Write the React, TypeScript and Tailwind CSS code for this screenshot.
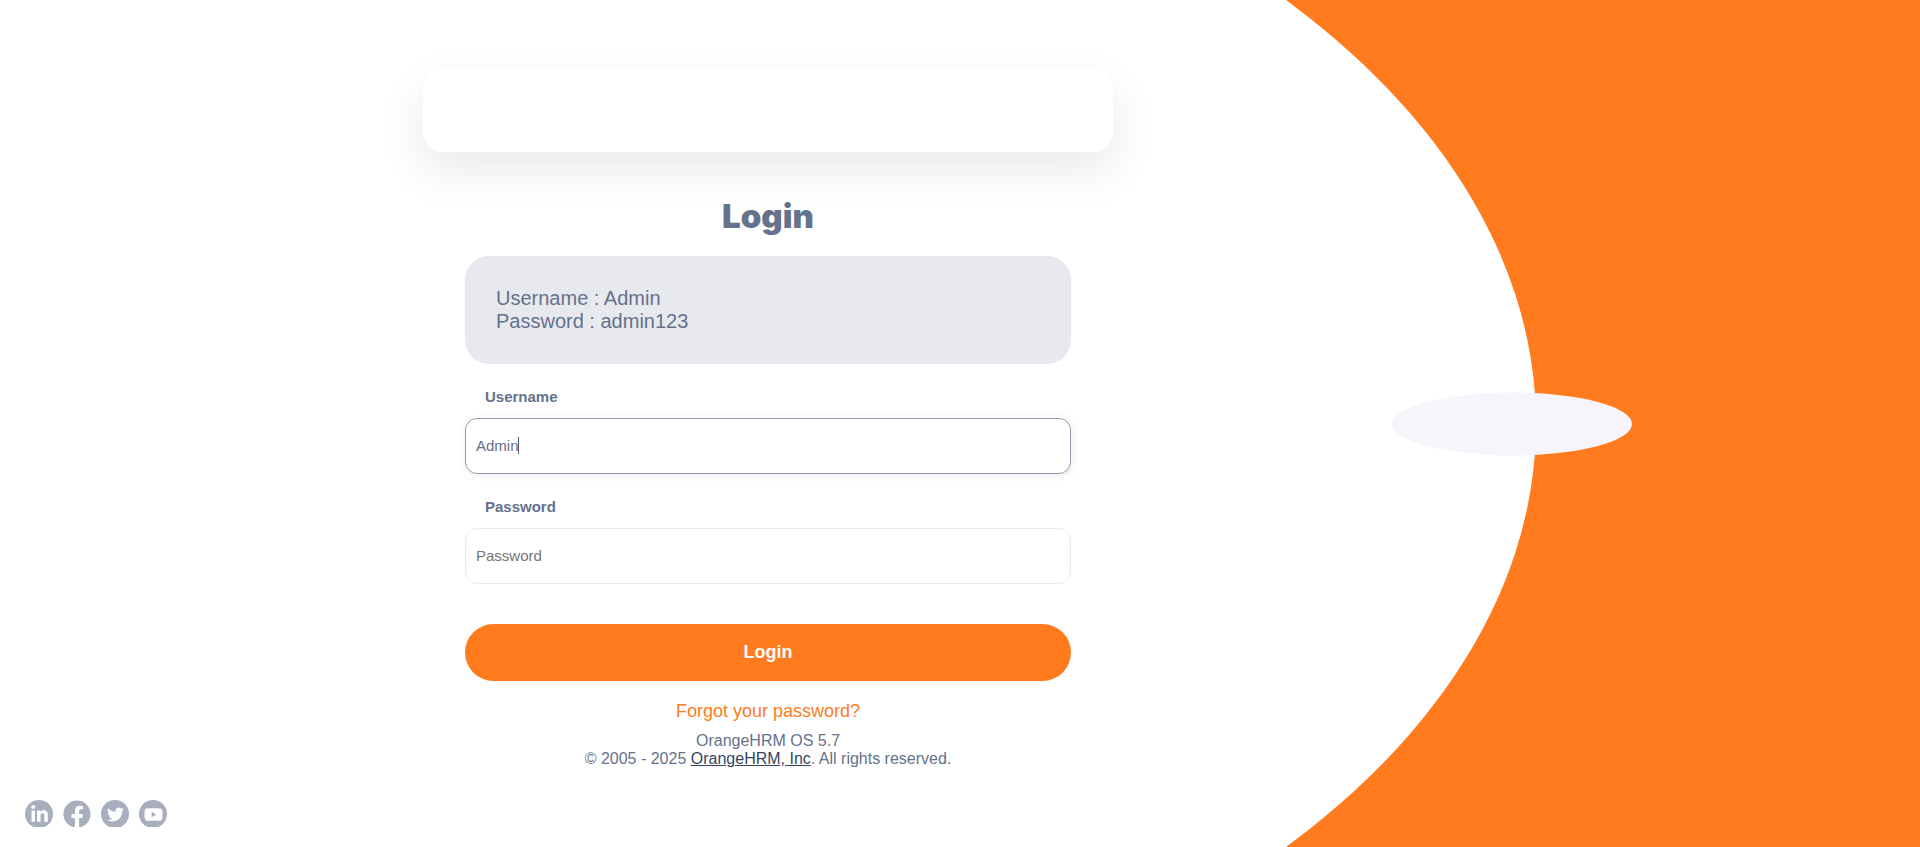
import { useState, type ReactNode } from "react";
import { FaFacebook, FaLinkedinIn, FaTwitter, FaYoutube } from "react-icons/fa";

function SocialLink({ label, children }: { label: string; children: ReactNode }) {
  return (
    <a href="#" aria-label={label} className="h-[27px] w-7 overflow-hidden">
      <span className="flex size-7 items-center justify-center rounded-full bg-[#a8aebd] text-white">
        {children}
      </span>
    </a>
  );
}

const fieldClass =
  "h-14 w-full rounded-xl border bg-white px-2.5 pb-0.5 text-[15px] text-[#64728c] caret-transparent outline-none placeholder:text-[#757575]";

export default function App() {
  const [username, setUsername] = useState("Admin");

  return (
    <div className="relative min-h-screen overflow-hidden bg-[#ff7b1d] font-['Liberation_Sans',Arial,sans-serif] text-[#64728c]">
      <div className="absolute inset-y-0 left-0 w-4/5 bg-white [clip-path:ellipse(70%_78%_at_30%_50%)]" />
      <div className="absolute top-1/2 left-4/5 -ml-36 h-[63px] w-60 -translate-y-1/2 rounded-[50%] bg-[#f6f5fb]" />

      <main className="relative flex min-h-screen w-4/5 flex-col items-center pt-[69px]">
        <div className="h-[83px] w-full max-w-[690px] rounded-[20px] bg-white shadow-[0_18px_48px_rgba(0,0,0,0.09)]" />

        <div className="flex w-full max-w-[606px] flex-col">
          <h1 className="mt-11 text-center font-['Inter',sans-serif] text-[33px] leading-10 font-black">
            Login
          </h1>

          <div className="mt-5 h-[108px] rounded-3xl bg-[#e8e9ef] px-[31px] pt-[31px] text-xl leading-[23px]">
            <p>Username : Admin</p>
            <p>Password : admin123</p>
          </div>

          <form className="flex flex-col" onSubmit={(e) => e.preventDefault()}>
            <label htmlFor="username" className="mt-6 pl-5 text-[15px] leading-[18px] font-bold">
              Username
            </label>
            <div className="relative mt-3 flex">
              <input
                id="username"
                value={username}
                onChange={(e) => setUsername(e.target.value)}
                className={`${fieldClass} border-[#9299ac] shadow-[1px_1px_8px_rgba(0,0,0,0.08)]`}
              />
              <span className="absolute top-[19px] left-[53px] h-[17px] w-px bg-[#4f5d78]" />
            </div>

            <label htmlFor="password" className="mt-6 pl-5 text-[15px] leading-[18px] font-bold">
              Password
            </label>
            <div className="mt-3 flex">
              <input
                id="password"
                type="password"
                placeholder="Password"
                className={`${fieldClass} border-[#e8eaef]`}
              />
            </div>

            <button
              type="submit"
              className="mt-10 h-[57px] rounded-full bg-[#ff7b1d] pb-0.5 text-lg font-bold text-white"
            >
              Login
            </button>
          </form>

          <a href="#" className="mt-5 self-center text-lg leading-5 text-[#ff7b1d]">
            Forgot your password?
          </a>
          <footer className="mt-[11px] text-center text-base leading-[18px]">
            <p>OrangeHRM OS 5.7</p>
            <p>
              © 2005 - 2025{" "}
              <a href="#" className="text-[#35455f] underline">
                OrangeHRM, Inc
              </a>
              . All rights reserved.
            </p>
          </footer>
        </div>

        <nav className="mt-auto mb-5 ml-[25px] flex gap-2.5 self-start">
          <SocialLink label="LinkedIn">
            <FaLinkedinIn className="size-[19px]" />
          </SocialLink>
          <a href="#" aria-label="Facebook" className="h-[27px] w-7 overflow-hidden text-[#a8aebd]">
            <FaFacebook className="size-7" />
          </a>
          <SocialLink label="Twitter">
            <FaTwitter className="size-[17px]" />
          </SocialLink>
          <SocialLink label="YouTube">
            <FaYoutube className="size-[19px]" />
          </SocialLink>
        </nav>
      </main>
    </div>
  );
}
